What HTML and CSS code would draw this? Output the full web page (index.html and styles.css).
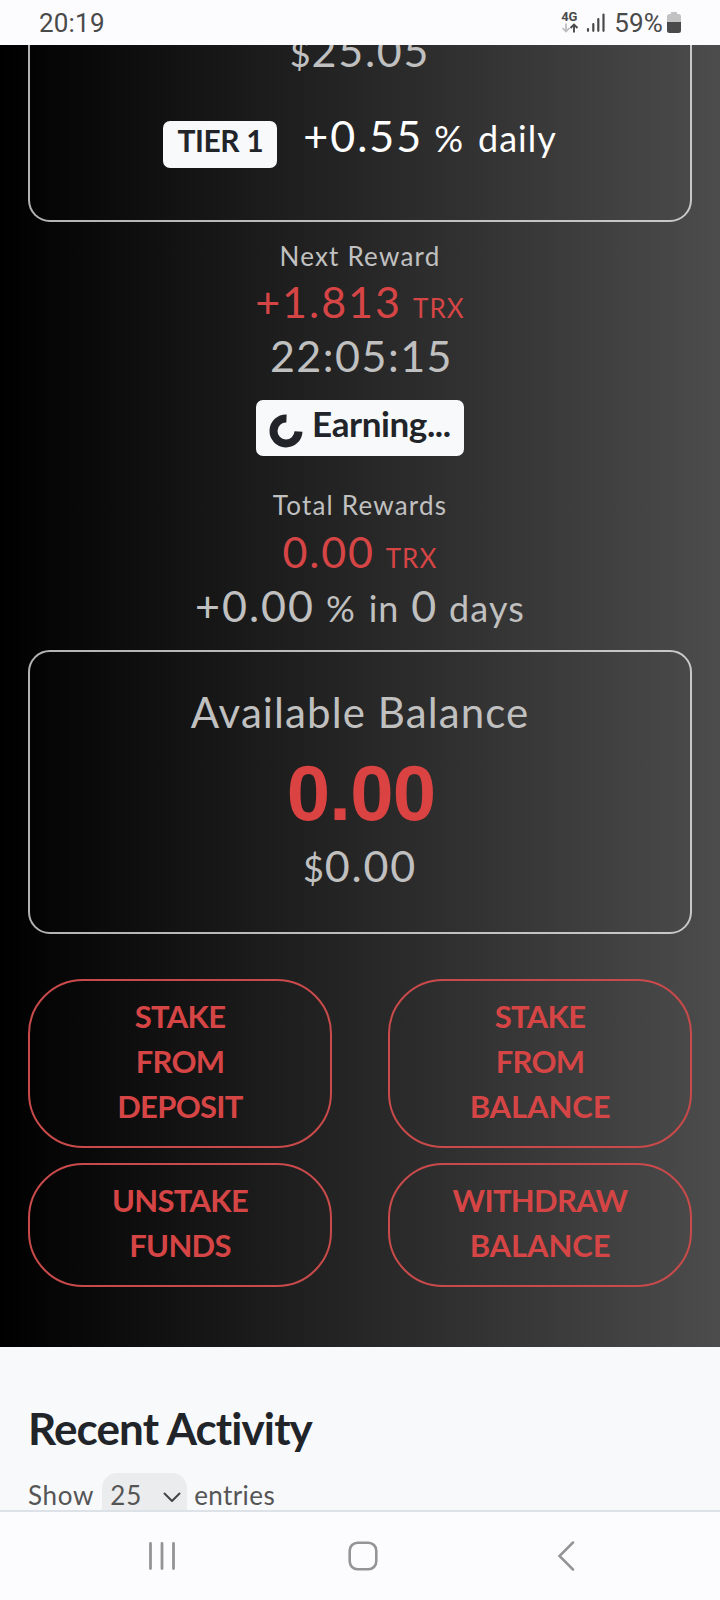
FILE: index.html
```html
<!DOCTYPE html>
<html lang="en">
<head>
<meta charset="utf-8">
<title>Staking</title>
<link rel="stylesheet" href="styles.css">
</head>
<body>
<div class="screen">
  <header class="status">
    <span class="clock">20:19</span>
    <div class="indicators">
      <div class="network">
        <span class="network-label">4G</span>
        <svg width="18" height="11" viewBox="0 0 18 11" fill="none">
          <path d="M5 0.500v8M1.500 5l3.500 3.500L8.500 5" stroke="#bbb" stroke-width="1.700"/>
          <path d="M13 9.500v-8M9.500 5L13 1.500l3.500 3.500" stroke="#4a4a4a" stroke-width="1.900"/>
        </svg>
      </div>
      <svg class="signal" width="20" height="20" viewBox="0 0 20 20" stroke="#4a4a4a" stroke-width="2.200" stroke-linecap="round">
        <path d="M2 16v1.800M7.300 11v6.800M12.300 6v11.800M17.500 1.500v16.300"/>
      </svg>
      <span class="percent">59%</span>
      <svg class="battery" width="14" height="22" viewBox="0 0 14 22">
        <path d="M4 0h6v2h1.500A2.500 2.500 0 0 1 14 4.500V11H0V4.500A2.500 2.500 0 0 1 2.500 2H4z" fill="#c2c2c2"/>
        <path d="M0 10h14v8.500a2.500 2.500 0 0 1-2.500 2.500h-9A2.500 2.500 0 0 1 0 18.500z" fill="#4a4a4a"/>
      </svg>
    </div>
  </header>

  <main class="hero">
    <section class="card card-staked">
      <div class="line money"><span class="mid">$</span><span class="big">25.05</span></div>
      <div class="line tier">
        <span class="badge">TIER 1</span>
        <span class="big plus">+0.55</span><span class="mid pct">%</span><span class="mid daily">daily</span>
      </div>
    </section>

    <section class="rewards">
      <div class="label">Next Reward</div>
      <div class="line red"><span class="big plus">+1.813</span><span class="trx">TRX</span></div>
      <div class="line"><span class="big timer">22:05:15</span></div>
      <div class="earning">
        <svg width="34" height="34" viewBox="0 0 34 34" fill="none" stroke="#212529" stroke-width="8">
          <path d="M17.500 4.500A12.500 12.500 0 1 0 29.500 17.500"/>
        </svg>
        <span>Earning...</span>
      </div>
    </section>

    <section class="totals">
      <div class="label">Total Rewards</div>
      <div class="line red"><span class="big">0.00</span><span class="trx">TRX</span></div>
      <div class="line percent-line"><span class="big plus">+0.00</span><span class="mid pct">%</span><span class="mid in">in</span><span class="big count">0</span><span class="mid days">days</span></div>
    </section>

    <section class="card card-balance">
      <div class="title">Available Balance</div>
      <div class="amount">0.00</div>
      <div class="line money"><span class="mid">$</span><span class="big">0.00</span></div>
    </section>

    <div class="actions">
      <button class="action">STAKE<br>FROM<br>DEPOSIT</button>
      <button class="action">STAKE<br>FROM<br><span class="wide">BALANCE</span></button>
      <button class="action">UNSTAKE<br>FUNDS</button>
      <button class="action">WITHDRAW<br><span class="wide">BALANCE</span></button>
    </div>
  </main>

  <section class="activity">
    <h2 class="heading">Recent Activity</h2>
    <div class="entries">
      <span class="show">Show</span>
      <span class="select">25
        <svg width="18" height="11" viewBox="0 0 18 11" fill="none" stroke="#444" stroke-width="2" stroke-linecap="round" stroke-linejoin="round"><path d="M1.500 1.500L9 9l7.500-7.500"/></svg>
      </span>
      <span>entries</span>
    </div>
  </section>

  <nav class="navbar">
    <svg width="28" height="30" viewBox="0 0 28 30" stroke="#949496" stroke-width="2.800" stroke-linecap="round"><path d="M2.500 2.500v25M14 2.500v25M25.500 2.500v25"/></svg>
    <svg class="home" width="30" height="30" viewBox="0 0 30 30" fill="none" stroke="#949496" stroke-width="2.600"><rect x="1.700" y="1.700" width="26.600" height="26.600" rx="8"/></svg>
    <svg width="18" height="30" viewBox="0 0 18 30" fill="none" stroke="#949496" stroke-width="2.500" stroke-linecap="round"><path d="M16 1.500L2.500 15L16 28.500"/></svg>
  </nav>
</div>
</body>
</html>
```

FILE: styles.css
```css
* { box-sizing: border-box; }

body {
  margin: 0;
  font-family: Lato, sans-serif;
  background: #fcfcfe;
}

.screen {
  width: 720px;
  height: 1600px;
  overflow: hidden;
  display: flex;
  flex-direction: column;
}

/* Status bar */
.status {
  height: 45px;
  flex: none;
  display: flex;
  justify-content: space-between;
  padding: 0 39px;
  background: #fcfcfe;
  font: 26px/46px Roboto, sans-serif;
  letter-spacing: 0.2px;
  color: #4a4a4a;
}

.indicators { display: flex; }
.network { width: 18px; padding-top: 9px; display: flex; flex-direction: column; }
.network-label { font: bold 13px/15px Roboto, sans-serif; letter-spacing: 0; color: #4a4a4a; }
.network svg { display: block; margin-top: -1px; }
.signal { margin: 13px 0 0 7px; }
.percent { margin-left: 8px; }
.battery { margin: 12px 0 0 4px; }

/* Dark area */
.hero {
  height: 1302px;
  flex: none;
  overflow: hidden;
  padding: 0 28px;
  background: linear-gradient(90deg, #000, #4c4c4c);
  color: #c0c0c0;
}

.card {
  border: 2px solid rgba(255, 255, 255, 0.7);
  border-radius: 22px;
}

.card-staked { height: 199px; margin-top: -22px; padding-top: 1px; border-top: 0; border-top-left-radius: 0; border-top-right-radius: 0; }

.line {
  height: 54px;
  line-height: 54px;
  display: flex;
  justify-content: center;
  align-items: baseline;
}

.big { font-size: 43px; letter-spacing: 1.8px; }
.mid { font-size: 36px; letter-spacing: 0.9px; }
.plus { letter-spacing: 2px; }
.timer { letter-spacing: 1.5px; margin-left: 3px; }
.red { color: #d64545; }
.trx { font-size: 26px; letter-spacing: 1.1px; margin-left: 11px; }
.pct { margin-left: 11px; }

.tier { height: 60px; line-height: 61px; margin-top: 27px; color: #fff; }
.badge {
  width: 114px;
  height: 47px;
  padding-bottom: 9px;
  margin-right: 26px;
  border-radius: 7px;
  background: #f8f9fb;
  color: #212529;
  font-size: 30px;
  font-weight: 700;
  line-height: 38px;
  letter-spacing: -0.4px;
  text-align: center;
}
.daily { margin-left: 14px; letter-spacing: 1px; }
.in { margin-left: 13px; }
.count { margin-left: 12px; }
.days { margin-left: 11px; letter-spacing: 1.1px; }

.rewards { margin-top: 13px; }
.label { font-size: 26px; line-height: 42px; height: 40px; letter-spacing: 1.2px; text-align: center; }

.earning {
  width: 208px;
  height: 56px;
  margin: 17px auto 0;
  padding-left: 13px;
  display: flex;
  gap: 9px;
  border-radius: 7px;
  background: #f8f9fb;
  color: #212529;
  font-size: 35px;
  font-weight: 700;
  line-height: 46px;
  letter-spacing: -0.4px;
}
.earning svg { margin-top: 14px; }

.totals { margin-top: 28px; }
.totals .line { line-height: 55px; }
.totals .percent-line { line-height: 56px; }

.card-balance { height: 284px; margin-top: 18px; padding-top: 30px; }
.title { font-size: 42px; line-height: 60px; letter-spacing: 1.1px; text-align: center; }
.amount {
  height: 90px;
  margin: 5px 0 3px;
  padding-left: 2px;
  font-family: "Liberation Sans", Arial, sans-serif;
  font-size: 78px;
  font-weight: 700;
  line-height: 92px;
  letter-spacing: -0.8px;
  text-align: center;
  color: #db4242;
}
.card-balance .line { line-height: 51px; }

.actions {
  margin-top: 45px;
  display: grid;
  grid-template-columns: 304px 304px;
  grid-template-rows: 169px 124px;
  gap: 15px 56px;
}
.action {
  padding: 0 0 4px;
  display: block;
  border: 2px solid #c94a4a;
  border-radius: 55px;
  background: none;
  color: #d64545;
  font: 700 31px/45px Lato, sans-serif;
  letter-spacing: -0.7px;
  text-align: center;
}
.wide { letter-spacing: -0.1px; }

/* Activity */
.activity {
  height: 163px;
  flex: none;
  overflow: hidden;
  padding: 51px 28px 0;
  background: #f8f9fb;
}
.heading {
  margin: 0 0 15px;
  font-size: 44px;
  line-height: 60px;
  letter-spacing: -0.9px;
  color: #212529;
}
.entries {
  display: flex;
  align-items: baseline;
  font-size: 26px;
  line-height: 40px;
  letter-spacing: 0.4px;
  color: #555;
}
.show { letter-spacing: 0.7px; }
.select {
  width: 85px;
  height: 64px;
  margin: 0 7px 0 8px;
  padding: 2px 6px 0 8px;
  display: flex;
  justify-content: space-between;
  border-radius: 15px;
  background: #ebecee;
  letter-spacing: 0.9px;
}
.select svg { margin-top: 17px; }

/* System navigation */
.navbar {
  height: 90px;
  flex: none;
  display: flex;
  justify-content: space-between;
  padding: 29px 145px 0 148px;
  border-top: 2px solid #dce2e7;
  background: #fcfcfe;
}
.home { margin: 0 4px 0 -4px; }
```
